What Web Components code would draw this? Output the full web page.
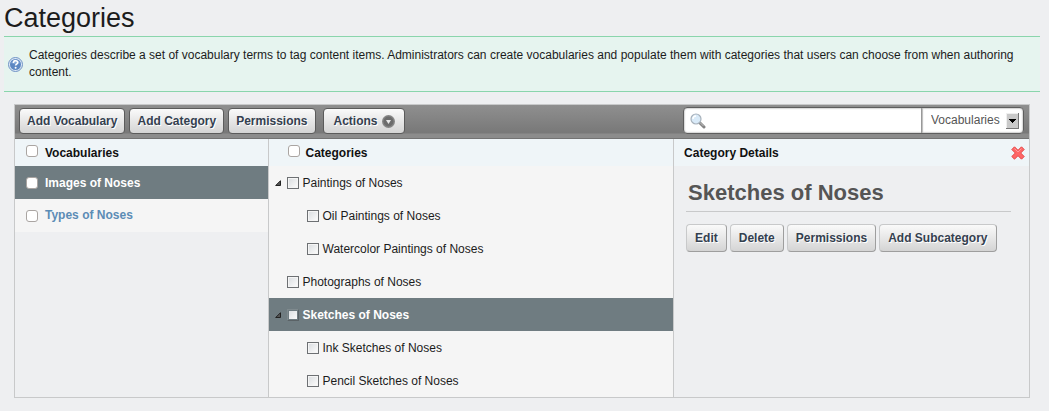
<!DOCTYPE html>
<html lang="en">
<head>
  <meta charset="utf-8">
  <meta name="viewport" content="width=device-width, initial-scale=1">
  <title>Categories</title>
  <style>
    body {
      margin: 0;
      background-color: #eeeff1;
      color: #1c1c1c;
      font: 12px/17px "Liberation Sans", Arial, sans-serif;
    }
  </style>
</head>
<body>
  <category-admin></category-admin>

  <script>
    const defineElement = (name, html) => {
      customElements.define(name, class extends HTMLElement {
        constructor() {
          super();
          this.attachShadow({ mode: 'open' }).innerHTML = html;
        }
      });
    };

    defineElement('help-message', `
      <style>
        :host {
          display: flex;
          align-items: center;
          gap: 6px;
          padding: 10px 4px;
          border: solid #8ad5ac;
          border-width: 1px 0;
          background-color: #e6f4ef;
        }
        svg {
          flex: none;
          width: 15px;
          height: 15px;
        }
        p {
          margin: 0;
        }
      </style>
      <svg viewBox="0 0 15 15" aria-hidden="true">
        <circle cx="7.500" cy="7.500" r="7" fill="#dce8f7" stroke="#7093c4"/>
        <circle cx="7.500" cy="7.500" r="5.500" fill="#5d87c2"/>
        <path d="M3 6a5 5 0 0 1 9 0Q8 8 3 6Z" fill="#84a7d8"/>
        <path d="M5.500 6V5.300c.2-2.200 4.200-2.200 4.200.2 0 1.600-2.100 1.500-2.100 3" fill="none" stroke="#fff" stroke-width="1.600"/>
        <circle cx="7.600" cy="10.700" r="1" fill="#fff"/>
      </svg>
      <p><slot></slot></p>
    `);

    class PushButton extends HTMLElement {
      constructor() {
        super();
        this.attachShadow({ mode: 'open' });
      }

      connectedCallback() {
        const arrow = this.hasAttribute('menu') ? `
          <svg viewBox="0 0 13 13" aria-hidden="true">
            <circle cx="6.500" cy="6.500" r="6.500" fill="#858585"/>
            <circle cx="6.500" cy="6.500" r="5" fill="#6c6c6c"/>
            <path d="M4 5h5L6.500 9Z" fill="#e8e8e8"/>
          </svg>` : '';
        this.shadowRoot.innerHTML = `
          <style>
            :host {
              display: block;
            }
            button {
              display: flex;
              align-items: center;
              gap: 4px;
              box-sizing: border-box;
              height: var(--button-height, 28px);
              margin: 0;
              padding: 0 var(--button-padding, 8px);
              border: 1px solid;
              border-color: var(--button-border, #c8c9ca #9e9e9e #9e9e9e #c8c9ca);
              border-radius: 4px;
              background: linear-gradient(#fafafa, #d4d4d4);
              color: #34404f;
              font: bold 12px/17px "Liberation Sans", Arial, sans-serif;
              text-shadow: 1px 1px #fff;
              white-space: nowrap;
            }
            :host([menu]) button {
              padding: 0 9px 0 10px;
            }
            svg {
              width: 13px;
              height: 13px;
            }
          </style>
          <button type="button"><slot></slot>${arrow}</button>
        `;
      }
    }
    customElements.define('push-button', PushButton);

    defineElement('search-bar', `
      <style>
        :host {
          display: flex;
          box-sizing: border-box;
          height: 27px;
          border: 1px solid #5e5e5e;
          border-radius: 4px;
          background-color: #fff;
          box-shadow: inset 0 0 2px #777;
        }
        .query {
          display: flex;
          align-items: center;
          flex: 1;
          min-width: 0;
          padding-left: 6px;
        }
        .query svg {
          flex: none;
          width: 16px;
          height: 16px;
        }
        input {
          flex: 1;
          min-width: 0;
          padding: 0 5px;
          border: 0;
          outline: 0;
          background: none;
          font: inherit;
        }
        .scope {
          display: flex;
          align-items: center;
          position: relative;
          border-left: 1px solid #999;
          box-shadow: inset 1px 0 1px #bbb;
        }
        select {
          appearance: none;
          height: 25px;
          width: 101px;
          padding: 0 20px 0 9px;
          border: 0;
          background: none;
          color: #555;
          font: inherit;
        }
        .scope svg {
          position: absolute;
          top: 5px;
          right: 4px;
          width: 13px;
          height: 16px;
          pointer-events: none;
        }
      </style>
      <div class="query">
        <svg viewBox="0 0 16 16" aria-hidden="true">
          <path d="M9.500 9.500 14 14" stroke="#858585" stroke-width="3" stroke-linecap="round"/>
          <path d="M10 9.500 13.500 13" stroke="#c4c4c4"/>
          <circle cx="6" cy="6" r="5" fill="#d9eaf8" stroke="#a8b2bc" stroke-width="1.200"/>
          <path d="M3 6a3 3 0 0 1 3-3" fill="none" stroke="#fff" stroke-width="1.400"/>
        </svg>
        <input type="text" aria-label="Search">
      </div>
      <div class="scope">
        <select aria-label="Search in">
          <option>Vocabularies</option>
          <option>Categories</option>
        </select>
        <svg viewBox="0 0 13 16" aria-hidden="true">
          <path d="M0 0h13v16H0Z" fill="#777"/>
          <path d="M0 0h12v15H0Z" fill="#efefef"/>
          <path d="M1 1h11v14H1Z" fill="#c9c9c9"/>
          <path d="M3 6h7v1H9v1H8v1H7v1H6V9H5V8H4V7H3Z" fill="#000"/>
        </svg>
      </div>
    `);

    defineElement('tool-bar', `
      <style>
        :host {
          display: flex;
          align-items: flex-end;
          justify-content: space-between;
          padding: 2px 5px 4px 4px;
          border-bottom: 1px solid #737373;
          background: linear-gradient(#8f8f8f, #787878 28px, #8c8c8c 29px);
          --button-height: 26px;
          --button-padding: 7px;
          --button-border: #5b5b5b;
        }
        div {
          display: flex;
          gap: 4px;
        }
        push-button[menu] {
          margin-left: 3px;
        }
        search-bar {
          width: 341px;
        }
      </style>
      <div>
        <push-button>Add Vocabulary</push-button>
        <push-button>Add Category</push-button>
        <push-button>Permissions</push-button>
        <push-button menu>Actions</push-button>
      </div>
      <search-bar></search-bar>
    `);

    defineElement('check-item', `
      <style>
        :host {
          display: flex;
          align-items: center;
          box-sizing: border-box;
          height: 33px;
          padding-left: 11px;
          color: #5c8cb5;
          font-weight: bold;
        }
        :host([heading]) {
          height: 27px;
          background-color: #eff5f8;
          color: #111;
        }
        :host([indent]) {
          padding-left: 19px;
        }
        :host([selected]) {
          background-color: #6f7c81;
          color: #fff;
        }
        label {
          display: flex;
          align-items: center;
          gap: 7px;
        }
        :host([indent]) label {
          gap: 6px;
        }
        input {
          appearance: none;
          box-sizing: border-box;
          width: 12px;
          height: 12px;
          margin: 0;
          border: 1px solid #aaa5a2;
          border-radius: 3px;
          background-color: #fff;
        }
        :host([heading]) input {
          margin-bottom: 3px;
        }
        :host([heading]) span,
        :host([selected]) span {
          padding-top: 2px;
        }
      </style>
      <label><input type="checkbox"><span><slot></slot></span></label>
    `);

    class TreeItem extends HTMLElement {
      constructor() {
        super();
        this.attachShadow({ mode: 'open' }).innerHTML = `
          <style>
            :host {
              display: block;
            }
            .row {
              display: flex;
              align-items: center;
              height: 33px;
              padding-left: var(--tree-indent, 6px);
            }
            :host([selected]) .row {
              background-color: #6f7c81;
              color: #fff;
              font-weight: bold;
            }
            svg {
              width: 6px;
              height: 6px;
              margin-right: 6px;
              visibility: hidden;
            }
            :host([expanded]) svg {
              visibility: visible;
            }
            label {
              display: flex;
              align-items: center;
              gap: 4px;
            }
            span {
              padding-top: 2px;
            }
            input {
              appearance: none;
              box-sizing: border-box;
              width: 12px;
              height: 12px;
              margin: 0;
              padding: 1px;
              border: 1px solid #6d7073;
              background: linear-gradient(135deg, #dcdfe2, #fafafa) content-box #fff;
            }
            :host([selected]) input {
              border-color: #7f8a8e #5a6266 #5a6266 #7f8a8e;
            }
          </style>
          <div class="row">
            <svg viewBox="0 0 6 6" aria-hidden="true">
              <path d="M5.500.7v4.800H.7Z" fill="#555" stroke="#222"/>
            </svg>
            <label><input type="checkbox"><span></span></label>
          </div>
          <slot></slot>
        `;
      }

      connectedCallback() {
        this.shadowRoot.querySelector('span').textContent = this.getAttribute('label');
      }
    }
    customElements.define('tree-item', TreeItem);

    defineElement('category-details', `
      <style>
        :host {
          display: block;
        }
        header {
          display: flex;
          align-items: center;
          justify-content: space-between;
          height: 27px;
          padding: 0 4px 0 10px;
          background-color: #eff5f8;
          color: #111;
          font-weight: bold;
        }
        header span {
          padding-top: 2px;
        }
        .close {
          display: flex;
          padding: 0;
          border: 0;
          background: none;
        }
        .close svg {
          width: 14px;
          height: 14px;
        }
        section {
          padding: 12px 18px 12px 12px;
        }
        h2 {
          margin: 0 0 12px;
          padding: 2px 2px 5px;
          border-bottom: 1px solid #c8c9ca;
          color: #555;
          font-size: 22px;
          line-height: 26px;
        }
        .actions {
          display: flex;
          flex-wrap: wrap;
          gap: 3px;
        }
      </style>
      <header>
        <span>Category Details</span>
        <button class="close" type="button" aria-label="Close">
          <svg viewBox="0 0 14 14" aria-hidden="true">
            <path d="M3.500.8 7 4.300 10.500.8l2.700 2.700L9.700 7l3.500 3.500-2.700 2.700L7 9.700l-3.500 3.500L.8 10.500 4.300 7 .8 3.500Z" fill="#f66" stroke="#e34a4a" stroke-linejoin="round"/>
            <path d="M3.500 2.500 7 6l3.500-3.500" fill="none" stroke="#ff9c9c"/>
          </svg>
        </button>
      </header>
      <section>
        <h2><slot name="title"></slot></h2>
        <div class="actions">
          <push-button>Edit</push-button>
          <push-button>Delete</push-button>
          <push-button>Permissions</push-button>
          <push-button>Add Subcategory</push-button>
        </div>
      </section>
    `);

    defineElement('category-admin', `
      <style>
        :host {
          display: block;
          padding: 0 9px 13px 4px;
        }
        h1 {
          margin: 0;
          padding: 2px 0;
          font-size: 27px;
          font-weight: normal;
          line-height: 32px;
        }
        main {
          margin: 12px 10px 0;
          border: 1px solid #c8c9ca;
        }
        .columns {
          display: grid;
          grid-template-columns: 5fr 8fr 7fr;
        }
        .columns > * {
          min-width: 0;
        }
        .columns > div {
          border-right: 1px solid #c8c9ca;
        }
        .light {
          background-color: #f5f5f5;
        }
        tree-item > tree-item {
          --tree-indent: 26px;
        }
      </style>
      <h1>Categories</h1>
      <help-message>Categories describe a set of vocabulary terms to tag content items. Administrators can create vocabularies and populate them with categories that users can choose from when authoring content.</help-message>
      <main>
        <tool-bar></tool-bar>
        <div class="columns">
          <div>
            <check-item heading>Vocabularies</check-item>
            <check-item selected>Images of Noses</check-item>
            <check-item class="light">Types of Noses</check-item>
          </div>
          <div class="light">
            <check-item heading indent>Categories</check-item>
            <tree-item label="Paintings of Noses" expanded>
              <tree-item label="Oil Paintings of Noses"></tree-item>
              <tree-item label="Watercolor Paintings of Noses"></tree-item>
            </tree-item>
            <tree-item label="Photographs of Noses"></tree-item>
            <tree-item label="Sketches of Noses" expanded selected>
              <tree-item label="Ink Sketches of Noses"></tree-item>
              <tree-item label="Pencil Sketches of Noses"></tree-item>
            </tree-item>
          </div>
          <category-details><span slot="title">Sketches of Noses</span></category-details>
        </div>
      </main>
    `);
  </script>
</body>
</html>
